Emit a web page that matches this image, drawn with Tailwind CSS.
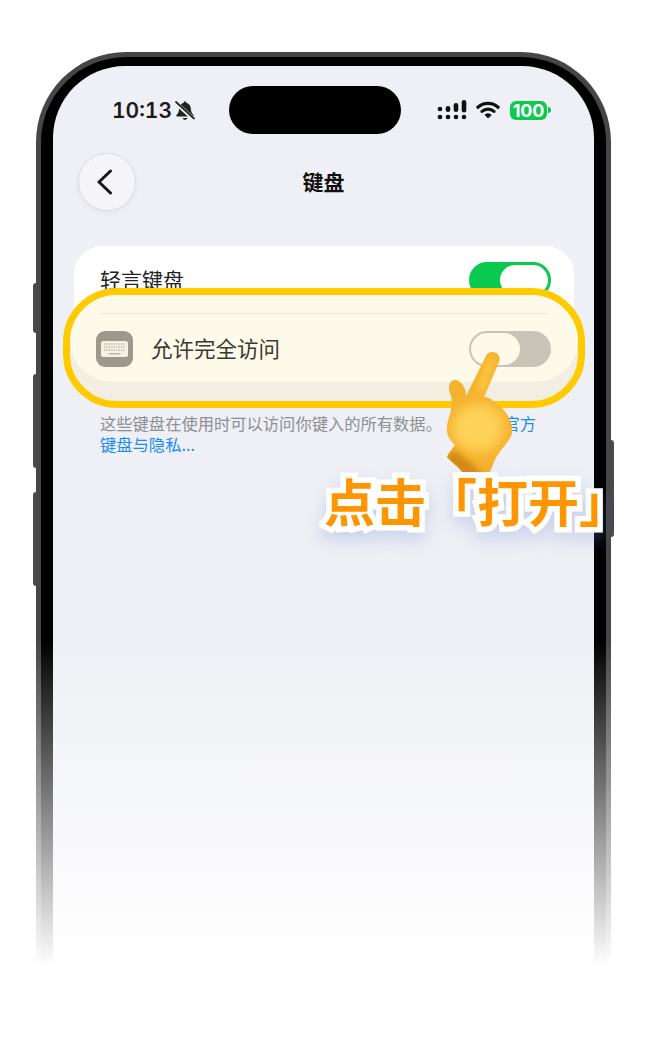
<!DOCTYPE html>
<html lang="zh">
<head>
<meta charset="utf-8">
<title>键盘</title>
<script src="https://cdn.jsdelivr.net/npm/@tailwindcss/browser@4"></script>
</head>
<body class="bg-white">
<div class="relative w-[647px] h-[1040px] overflow-hidden bg-white font-['Inter','Noto_Sans_CJK_SC',sans-serif]">

  <!-- Phone -->
  <div class="relative ml-[36px] mt-[52px] w-[575px] h-[1100px]">
    <!-- Side buttons -->
    <div class="absolute left-[-3px] top-[231px] w-[3px] h-[50px] rounded-l-sm bg-[#4a4a4a]"></div>
    <div class="absolute left-[-3px] top-[322px] w-[3px] h-[94px] rounded-l-sm bg-[#4a4a4a]"></div>
    <div class="absolute left-[-3px] top-[440px] w-[3px] h-[94px] rounded-l-sm bg-[#4a4a4a]"></div>
    <div class="absolute right-[-3px] top-[388px] w-[3px] h-[97px] rounded-r-sm bg-[#4a4a4a]"></div>

    <div class="h-full rounded-[90px] bg-[#464648] p-[5px]">
      <div class="h-full rounded-[85px] bg-black pt-[9px] pl-[12px] pr-[12px]">
        <!-- Screen -->
        <div class="h-full w-[541px] rounded-[72px] bg-[#eff0f5] overflow-hidden">

          <!-- Status bar -->
          <div class="flex items-center pt-[20px] pl-[59px]">
            <div class="flex items-center w-[117px] gap-[3px]">
              <span class="text-[21px] leading-none font-semibold text-[#1a1a1a] tabular-nums">10:13</span>
              <svg width="20" height="19" viewBox="0 0 20 19">
                <path fill="#222" d="M10 0.500c1 0 1.500.7 1.600 1.500 2.900.7 4.100 3 4.300 6 .2 2.800 1 4.500 2.600 6.100.5.600.2 1.400-.6 1.400H2.100c-.8 0-1.100-.8-.6-1.400C3.100 12.500 3.900 10.800 4.100 8c.2-3 1.400-5.300 4.300-6 .1-.8.6-1.500 1.600-1.500z"/>
                <path fill="#222" d="M7.600 17h4.800c-.3 1.100-1.200 1.800-2.400 1.800s-2.100-.7-2.400-1.800z"/>
                <path d="M1.500 2.500 18 17.500" stroke="#eff0f5" stroke-width="4" fill="none"/>
                <path d="M1 1 19 17.500" stroke="#222" stroke-width="1.700" fill="none" stroke-linecap="round"/>
              </svg>
            </div>
            <div class="w-[172px] h-[48px] rounded-full bg-black"></div>
            <div class="flex items-center ml-[36px]">
              <svg width="30" height="20" viewBox="0 0 30 20" fill="#111">
                <circle cx="3" cy="9" r="2.300"/><circle cx="3" cy="17" r="2.300"/>
                <rect x="8.700" y="6" width="4.600" height="6" rx="2.300"/><circle cx="11" cy="17" r="2.300"/>
                <rect x="16.700" y="3" width="4.600" height="9" rx="2.300"/><circle cx="19" cy="17" r="2.300"/>
                <rect x="24.700" y="0" width="4.600" height="12.500" rx="2.300"/><circle cx="27" cy="17" r="2.300"/>
              </svg>
              <svg class="ml-[9px]" width="24" height="18" viewBox="0 0 24 18" fill="none" stroke="#111" stroke-linecap="round">
                <path d="M1.900 6.200C7.600 1 16.400 1 22.100 6.200" stroke-width="3.200"/>
                <path d="M6 10.400c3.500-3 8.500-3 12 0" stroke-width="3.200"/>
                <path d="M12 16.800 9 13.800c1.800-1.300 4.200-1.300 6 0z" fill="#111" stroke="#111" stroke-width="1" stroke-linejoin="round"/>
              </svg>
              <div class="ml-[10px] flex items-center">
                <div class="w-[37px] h-[19px] rounded-[6px] bg-[#09c94f] text-white text-[18px] leading-[19px] font-bold text-center tracking-[-0.2px]">100</div>
                <div class="w-[3px] h-[6px] ml-[1px] rounded-r-sm bg-[#09c94f]"></div>
              </div>
            </div>
          </div>

          <!-- Nav -->
          <div class="grid grid-cols-[1fr_auto_1fr] items-center mt-[19px] px-[25px]">
            <div class="w-[58px] h-[58px] rounded-full border border-[#dcdce2] bg-[#f5f5f9] shadow-[0_2px_6px_rgba(0,0,0,0.05)] flex items-center justify-center">
              <svg class="ml-[-4px]" width="18" height="26" viewBox="0 0 18 26" fill="none" stroke="#16161a" stroke-width="3" stroke-linecap="round" stroke-linejoin="round">
                <path d="M14.500 2 3 13l11.500 11"/>
              </svg>
            </div>
            <div class="text-[21px] font-semibold text-[#111] font-['Noto_Sans_CJK_SC',sans-serif]">键盘</div>
            <div></div>
          </div>

          <!-- Settings card -->
          <div class="relative mt-[35px] mx-[21px] w-[500px] h-[137px] rounded-[28px] bg-white">
            <div class="flex items-center justify-between h-[68px] pl-[26px] pr-[23px]">
              <span class="text-[21px] text-[#222] font-['Noto_Sans_CJK_SC',sans-serif]">轻言键盘</span>
              <div class="flex items-center justify-end w-[82px] h-[36px] rounded-full bg-[#09c94f] pr-[3px]">
                <div class="w-[48px] h-[30px] rounded-full bg-white"></div>
              </div>
            </div>

            <!-- Highlight ring -->
            <div class="absolute left-[-11px] top-[42px] w-[522px] h-[120px] rounded-[54px] border-[7.5px] border-[#ffcb00] bg-[#f2eee2] overflow-hidden">
              <div class="h-[87px] rounded-b-[42px] bg-[#fdfaea] pt-[18px]">
                <div class="mx-[30px] h-px bg-[#ebe7d8]"></div>
                <div class="flex items-center justify-between h-[69px] pl-[26px] pr-[27px]">
                  <div class="flex items-center gap-[18px]">
                    <div class="flex items-center justify-center w-[37px] h-[36px] rounded-[9px] bg-[#9c988b]">
                      <svg width="27" height="16" viewBox="0 0 27 16">
                        <rect width="27" height="16" rx="2.500" fill="#f5f2e4"/>
                        <g fill="none" stroke="#bdb9ab" stroke-width="1.400" stroke-dasharray="1.400 1">
                          <path d="M3 3h21M3 6h21M3 9h21"/>
                        </g>
                        <path d="M7.500 12.800h12" stroke="#bdb9ab" stroke-width="1.500"/>
                      </svg>
                    </div>
                    <span class="text-[21.500px] text-[#3a3830] font-['Noto_Sans_CJK_SC',sans-serif]">允许完全访问</span>
                  </div>
                  <div class="flex items-center w-[82px] h-[36px] rounded-full bg-[#c8c5b8] pl-[2px]">
                    <div class="w-[49px] h-[32px] rounded-full bg-[#fdfaea]"></div>
                  </div>
                </div>
              </div>
            </div>
          </div>

          <!-- Footnote -->
          <div class="mt-[30px] pl-[47px] w-[500px] text-[16.300px] leading-[21px] text-[#8e8e93] font-['Noto_Sans_CJK_SC',sans-serif]">
            <p class="whitespace-nowrap">这些键盘在使用时可以访问你键入的所有数据。<span class="ml-[29px] text-[#1a8cf6]">了解官方</span></p>
            <p class="text-[#1a8cf6]">键盘与隐私...</p>
          </div>
        </div>
      </div>
    </div>
  </div>

  <!-- Fade out towards the bottom -->
  <div class="absolute left-0 right-0 top-[640px] h-[326px] bg-linear-to-b from-white/0 to-white"></div>
  <div class="absolute left-0 right-0 top-[966px] bottom-0 bg-white"></div>

  <!-- Pointing hand -->
  <svg class="absolute left-[440px] top-[348px]" width="80" height="126" viewBox="440 348 80 126">
    <defs>
      <clipPath id="hand-shape">
        <path d="M487 354C490 351 497 351 499 356C501 360 498 364 496 369L484 397C487 397 491 398 493 401C498 404 503 408 506 413C510 418 513 426 512 433C510 441 503 447 499 453C495 458 493 465 490 472L462 472C458 466 452 463 447 457C449 452 452 449 455 445C450 440 446 434 447 428C447 421 450 416 451 410C452 404 452 399 451 396C449 391 448 386 450 383C452 379 458 379 461 383C465 387 466 391 466 396Z"/>
      </clipPath>
      <filter id="soft" x="-50%" y="-50%" width="200%" height="200%"><feGaussianBlur stdDeviation="6"/></filter>
      <filter id="soft-sm" x="-50%" y="-50%" width="200%" height="200%"><feGaussianBlur stdDeviation="3"/></filter>
    </defs>
    <g clip-path="url(#hand-shape)">
      <rect x="440" y="348" width="80" height="126" fill="#f5b22e"/>
      <ellipse cx="478" cy="428" rx="26" ry="24" fill="#ffd258" filter="url(#soft)"/>
      <path d="M492 358 480 392" stroke="#fcc640" stroke-width="8" fill="none" filter="url(#soft-sm)"/>
      <path d="M456 388 456 412" stroke="#fbc03a" stroke-width="6" fill="none" filter="url(#soft-sm)"/>
      <path d="M442 458 464 476 484 476 470 462 454 450Z" fill="#d18912" filter="url(#soft-sm)"/>
    </g>
  </svg>

  <!-- Callout -->
  <div class="absolute left-[324px] top-[469px] whitespace-nowrap text-[51px] leading-[62px] font-bold text-[#ff9500] font-['Noto_Sans_CJK_SC',sans-serif] [-webkit-text-stroke:11px_white] [paint-order:stroke_fill] drop-shadow-[0_8px_8px_rgba(120,140,210,0.3)]">点击「打开」</div>
</div>
</body>
</html>
